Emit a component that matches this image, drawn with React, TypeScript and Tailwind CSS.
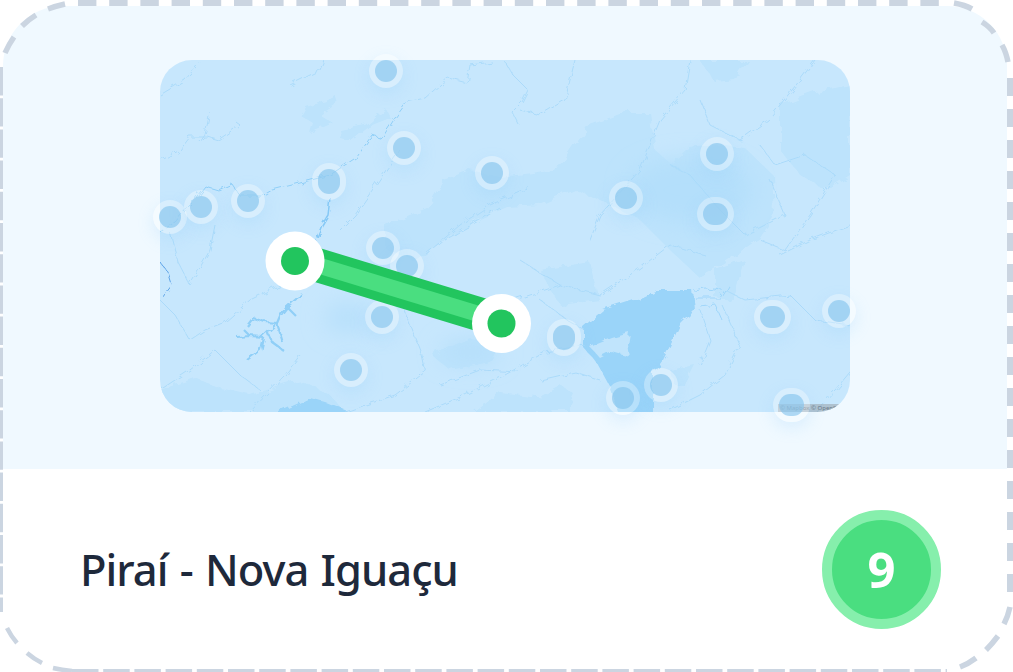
const pins = [
  { x: 386, y: 71, w: 34, h: 34 },
  { x: 404, y: 148, w: 34, h: 34 },
  { x: 492, y: 173, w: 34, h: 34 },
  { x: 329, y: 181, w: 34, h: 37 },
  { x: 717, y: 154, w: 34, h: 34 },
  { x: 626, y: 198, w: 34, h: 34 },
  { x: 715, y: 214, w: 37, h: 34 },
  { x: 170, y: 217, w: 34, h: 34 },
  { x: 201, y: 207, w: 34, h: 34 },
  { x: 248, y: 201, w: 34, h: 34 },
  { x: 383, y: 248, w: 34, h: 34 },
  { x: 407, y: 266, w: 34, h: 34 },
  { x: 382, y: 317, w: 34, h: 34 },
  { x: 351, y: 370, w: 34, h: 34 },
  { x: 564, y: 337, w: 34, h: 37 },
  { x: 623, y: 398, w: 34, h: 34 },
  { x: 661, y: 385, w: 34, h: 34 },
  { x: 772, y: 317, w: 37, h: 34 },
  { x: 839, y: 311, w: 34, h: 34 },
  { x: 791, y: 405, w: 37, h: 34 },
];

const rivers = [
  "M162 160 L180 150 L190 137 L208 137 L218 140 L240 125 L236 122",
  "M210 112 L205 135 L200 142",
  "M160 95 L185 80 L200 62",
  "M290 85 L320 70 L324 60",
  "M407 102 L425 98 L448 78 L467 83 L470 65 L492 62",
  "M505 62 L512 74 L528 90 L522 102 L512 112 L518 124",
  "M160 300 L175 315 L190 340 L205 330 L225 322 L250 300 L280 285 L305 272",
  "M170 232 L178 262 L190 285 L210 250 L215 225",
  "M340 260 L360 280 L400 300 L420 350 L425 372 L395 395 L345 412",
  "M400 150 L355 215 L340 230",
  "M425 255 L460 225 L490 205 L530 188",
  "M445 240 L480 220 L500 208",
  "M575 60 L565 100 L540 115 L520 110",
  "M690 60 L685 90 L660 120 L640 170 L600 215 L590 240",
  "M700 100 L710 125 L740 140 L768 120 L800 80 L815 60",
  "M760 145 L775 165 L805 155 L835 175 L810 215 L785 250 L760 240",
  "M770 180 L785 215 L745 235 L720 210 L690 175 L670 165",
  "M850 225 L810 240 L780 255",
  "M520 260 L560 285 L600 295 L640 268 L670 245 L705 255",
  "M540 300 L570 322 L585 330",
  "M725 290 L745 300 L790 295 L815 320 L850 325",
  "M722 305 L740 345 L725 375 L700 395 L670 410",
  "M700 310 L710 340 L700 365",
  "M585 345 L545 352 L505 375 L465 395 L425 412",
  "M540 380 L575 372 L600 380",
  "M850 372 L835 390 L815 412",
  "M160 390 L190 370 L215 350 L240 375 L260 390",
  "M250 412 L285 375 L300 355",
  "M480 320 L515 300 L560 285",
  "M440 385 L480 370 L520 372",
];

const reservoir = [
  "M302 294 L295 300 L287 307 L280 316 L277 323 L265 322 L253 318",
  "M277 323 L283 343",
  "M277 323 L268 332 L263 337 L250 336 L237 337",
  "M263 337 L260 350 L247 360",
  "M268 332 L272 342 L283 350",
  "M287 307 L296 316",
  "M253 318 L247 326",
  "M250 336 L244 330",
];

function Pin({ x, y, w, h }: { x: number; y: number; w: number; h: number }) {
  return (
    <div
      className="absolute flex items-center justify-center rounded-full bg-white/30 shadow-[0_6px_16px_rgba(140,205,250,0.22)]"
      style={{ left: x - 160 - w / 2, top: y - 60 - h / 2, width: w, height: h }}
    >
      <div className="rounded-full bg-[#7ec2ec]/60" style={{ width: w - 12, height: h - 12 }} />
    </div>
  );
}

function MapArt() {
  return (
    <svg viewBox="160 60 690 352" className="block w-full h-full">
      <defs>
        <filter id="rough" filterUnits="userSpaceOnUse" x="140" y="40" width="730" height="392">
          <feTurbulence type="fractalNoise" baseFrequency="0.09" numOctaves="3" seed="4" />
          <feDisplacementMap in="SourceGraphic" scale="9" />
        </filter>
        <filter id="wiggle" filterUnits="userSpaceOnUse" x="140" y="40" width="730" height="392">
          <feTurbulence type="fractalNoise" baseFrequency="0.13" numOctaves="2" seed="9" />
          <feDisplacementMap in="SourceGraphic" scale="7" />
        </filter>
        <filter id="blur" filterUnits="userSpaceOnUse" x="140" y="40" width="730" height="392">
          <feGaussianBlur stdDeviation="11" />
        </filter>
      </defs>
      <rect x="160" y="60" width="690" height="352" fill="#c7e7fd" />
      <g filter="url(#rough)" fill="#bde3fc">
        {/* terrain band through the middle */}
        <path d="M385 225 L427 208 L443 180 L470 170 L500 177 L533 173 L560 167 L575 145 L590 125 L625 112 L650 112 L655 150 L672 165 L690 148 L715 145 L745 148 L773 175 L775 215 L760 238 L725 262 L700 278 L670 250 L640 220 L600 200 L575 190 L540 205 L507 207 L473 222 L443 242 L415 262 L385 248 Z" />
        <path d="M780 105 L815 92 L850 85 L850 175 L825 190 L800 175 L780 150 Z" />
        <path d="M160 412 L160 390 L195 378 L220 388 L250 395 L300 380 L330 395 L345 412 Z" />
        <path d="M432 355 L470 338 L500 345 L490 362 L450 370 Z" />
        <path d="M475 412 L500 392 L545 398 L552 412 Z" />
        <path d="M540 395 L560 385 L575 395 L568 410 L545 410 Z" />
        <path d="M540 270 L590 262 L600 300 L560 305 Z" />
        <path d="M715 270 L745 260 L735 300 L715 298 Z" />
        <path d="M700 60 L748 60 L735 80 L715 82 Z" />
        <path d="M670 370 L695 365 L685 385 L675 385 Z" />
        <path d="M305 106 L325 100 L335 95 L338 103 L320 115 L333 123 L310 133 L313 123 L300 115 Z" />
        <path d="M340 130 L365 125 L385 108 L390 118 L372 125 L365 130 L350 142 L342 140 Z" />
      </g>
      <ellipse cx="690" cy="190" rx="62" ry="32" fill="#b4dffb" filter="url(#blur)" />
      <ellipse cx="348" cy="318" rx="24" ry="16" fill="#b8e0fb" filter="url(#blur)" />
      <ellipse cx="470" cy="352" rx="30" ry="12" fill="#b6dffb" filter="url(#blur)" />
      <g filter="url(#rough)">
        <path
          d="M657 290 L693 290 L695 310 L680 325 L673 340 L663 360 L653 373 L653 416 L620 416 L610 387 L597 363 L583 347 L583 327 L603 310 L640 298 Z"
          fill="#9ad4f9"
        />
        <path d="M590 347 L612 338 L630 333 L628 345 L630 357 L612 352 L600 358 Z" fill="#c0e4fc" />
        <path d="M270 416 L310 398 L325 402 L360 416 Z" fill="#9ad4f9" />
      </g>
      <g filter="url(#wiggle)" fill="none" stroke="#a8d9f9" strokeWidth="0.9">
        {rivers.map((d) => (
          <path key={d} d={d} />
        ))}
        <path d="M693 290 L705 288 L722 290 M695 298 L720 298 L728 285 M700 306 L715 304 L722 320" stroke="#9ad4f9" />
      </g>
      <g filter="url(#wiggle)" fill="none" stroke="#90cff7" strokeLinejoin="round">
        <g strokeWidth="2.2">
          {reservoir.map((d) => (
            <path key={d} d={d} />
          ))}
        </g>
        <path d="M205 186 L218 190 L232 184 L240 196 L262 196 L272 190 L300 183 L330 175 L345 165 L357 157 L372 135 L382 138 L395 118 L407 102" strokeWidth="1" />
        <path d="M160 232 L175 222 L190 205 L205 186" strokeWidth="1" />
        <path d="M330 198 L328 215 L322 225 L316 240 L310 250" strokeWidth="1.5" stroke="#86c9f6" />
        <path d="M160 262 L168 272 L172 285 L162 298" stroke="#60a5e8" strokeWidth="1" />
      </g>
    </svg>
  );
}

// dashes differ per side in the reference, so the edge is drawn
function DashedEdge() {
  return (
    <svg viewBox="0 0 1013 672" className="absolute inset-0 w-full h-full pointer-events-none" fill="none" stroke="#cbd5e1">
      <path d="M78 3 H950" strokeWidth="6" strokeDasharray="18.4 12.8" />
      <path d="M1010 78 V600" strokeWidth="6" strokeDasharray="18 13" />
      <path d="M1.5 67 V612" strokeWidth="3" strokeDasharray="28.4 2.8" />
      <path d="M72 670.5 H947" strokeWidth="3" strokeDasharray="26.5 4.7" />
      <g strokeWidth="5.5">
        <path d="M48 9 Q56 6 65 4" />
        <path d="M22 26 Q28 20 36 15" />
        <path d="M5 53 Q9 44 14 37" />
        <path d="M954 3 Q965 5 972 9" />
        <path d="M982 22 Q990 27 994 33" />
        <path d="M1002 45 Q1006 52 1008 62" />
        <path d="M960 667 Q968 664 976 658" />
        <path d="M986 650 Q992 644 998 636" />
        <path d="M1004 624 Q1008 616 1010 607" />
      </g>
      <g strokeWidth="4.5">
        <path d="M7 628 Q11 636 17 643" />
        <path d="M27 653 Q34 659 42 663" />
        <path d="M53 668 Q62 670 72 671" />
      </g>
    </svg>
  );
}

export default function App() {
  return (
    <div className="relative w-[1013px] h-[672px] bg-white overflow-hidden font-['Noto_Sans',sans-serif]">
      <div className="h-full pl-[3px] pr-[6px] pt-[6px] pb-[3px]">
        <div className="h-full rounded-[60px] overflow-hidden flex flex-col">
          <div className="h-[463px] shrink-0 bg-[#f0f9ff] pt-[54px] pl-[157px]">
            <div className="relative w-[690px] h-[352px]">
              <div className="w-full h-full rounded-[32px] overflow-hidden relative">
                <MapArt />
                <div className="absolute right-0 bottom-0 h-[8px] w-[72px] bg-[#8a8a8a]/40 text-[6px] leading-[8px] text-[#6b7a88] pl-[2px] whitespace-nowrap overflow-hidden">
                  © Mapbox © OpenStreetMap
                </div>
              </div>
              {pins.map((p) => (
                <Pin key={`${p.x}-${p.y}`} {...p} />
              ))}
              <svg viewBox="160 60 690 352" className="absolute inset-0 w-full h-full overflow-visible">
                <path d="M295 258.3 L501.5 321" stroke="#22c55e" strokeWidth="34" />
                <path d="M295 258.3 L501.5 321" stroke="#4ade80" strokeWidth="16" />
                <circle cx="295" cy="261" r="29.5" fill="#fff" />
                <circle cx="295" cy="261" r="14" fill="#22c55e" />
                <circle cx="501.5" cy="323.5" r="29.5" fill="#fff" />
                <circle cx="501.5" cy="323.5" r="14" fill="#22c55e" />
              </svg>
            </div>
          </div>
          <div className="flex-1 flex items-center justify-between pl-[77px] pr-[66px] pt-[1px] bg-white">
            <h2 className="text-[43.5px] leading-none font-medium tracking-[-1px] [word-spacing:2px] text-[#1e293b] whitespace-nowrap">Piraí - Nova Iguaçu</h2>
            <div className="w-[119px] h-[119px] rounded-full bg-[#4ade80] border-[10px] border-[#86efac] flex items-center justify-center text-white text-[49px] font-bold">
              9
            </div>
          </div>
        </div>
      </div>
      <DashedEdge />
    </div>
  );
}
